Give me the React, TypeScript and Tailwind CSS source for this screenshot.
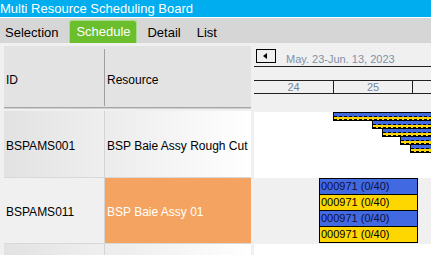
import React from "react";

type Row = {
    id: string;
    resource: string;
    active?: boolean;
};

const rows: Row[] = [
    { id: "BSPAMS001", resource: "BSP Baie Assy Rough Cut" },
    { id: "BSPAMS011", resource: "BSP Baie Assy 01", active: true },
    { id: "", resource: "" },
];

// tiny stacked bars in the first row (left, top inside the row)
const miniBars = [
    { left: 79, top: 0 },
    { left: 118, top: 8 },
    { left: 128, top: 16 },
    { left: 146, top: 24 },
    { left: 156, top: 32 },
];

const orders = ["blue", "yellow", "blue", "yellow"];

const MiniBar = ({ left, top }: { left: number; top: number }) => (
    <div
        className="absolute w-[200px] h-[9px] border border-black flex flex-col"
        style={{ left, top }}
    >
        <div className="h-[4px] bg-[#4169e1] border-b border-dashed border-black" />
        <div className="h-[3px] bg-[#ffd700] border-b border-dashed border-black" />
    </div>
);

const App = () => {
    return (
        <div className="w-[431px] h-[255px] overflow-hidden bg-[#f0f0f0] flex flex-col font-['Liberation_Sans',Arial,sans-serif]">
            <div className="h-[17px] shrink-0 bg-[#00adef] text-white text-[13px] leading-[17px] whitespace-nowrap">
                Multi Resource Scheduling Board
            </div>
            <div className="h-[1px] shrink-0 bg-white" />
            <div className="h-[25px] shrink-0 bg-[#d6d6d6] flex items-end text-[13px] text-black">
                <div className="ml-[5px] h-[23px] flex items-center pt-[3px]">Selection</div>
                <div className="ml-[11px] w-[68px] h-[23px] flex items-center justify-center bg-[#6bbe2c] border border-[#a8dc8a] border-b-0 rounded-t-[3px] text-white">
                    Schedule
                </div>
                <div className="ml-[10px] h-[23px] flex items-center pt-[3px]">Detail</div>
                <div className="ml-[16px] h-[23px] flex items-center pt-[3px]">List</div>
            </div>

            <div className="flex-1 flex pt-[3px] min-h-0 overflow-hidden">
                {/* resource grid */}
                <div className="ml-[4px] w-[247px] shrink-0 flex flex-col text-[12px] text-black">
                    <div className="h-[61px] shrink-0 bg-[#e3e3e3] flex">
                        <div className="w-[100px] flex items-center pt-[6px] pl-[2px]">ID</div>
                        <div className="w-[1px] mt-[3px] mb-[1px] bg-[#a0a0a0]" />
                        <div className="flex-1 flex items-center pt-[6px] pl-[2px]">Resource</div>
                    </div>
                    <div className="h-[1px] shrink-0 bg-[#a6a6a6]" />
                    <div className="h-[1px] shrink-0 bg-[#cfcfcf]" />
                    <div className="h-[2px] shrink-0" />
                    {rows.map((r, i) => (
                        <div
                            key={i}
                            className={`flex shrink-0 border-b border-[#d8d8d8] ${i === 0 ? "h-[67px]" : "h-[66px]"}`}
                        >
                            <div
                                className={`w-[100px] flex items-center pt-[3px] pl-[2px] ${
                                    r.active ? "bg-[#f0f0f0]" : "bg-linear-to-r from-[#e2e2e2] to-[#efefef]"
                                }`}
                            >
                                {r.id}
                            </div>
                            <div className="w-[1px] bg-[#d4d4d4]" />
                            <div
                                className={`flex-1 flex items-center pt-[3px] pl-[2px] whitespace-nowrap overflow-hidden ${
                                    r.active
                                        ? "bg-[#f4a460] text-white"
                                        : "bg-linear-to-r from-[#ececec] to-white"
                                }`}
                            >
                                {r.resource}
                            </div>
                        </div>
                    ))}
                </div>

                {/* gantt chart */}
                <div className="ml-[3px] flex-1 flex flex-col overflow-hidden">
                    <div className="h-[20px] shrink-0 flex items-start">
                        <div className="ml-[2px] mt-[3px] w-[20px] h-[14px] border border-black flex items-center pl-[6px]">
                            <div className="w-0 h-0 border-y-[3px] border-y-transparent border-r-[4px] border-r-black" />
                        </div>
                        <div className="ml-[10px] mt-[7px] text-[11px] leading-[13px] text-[#8090aa] whitespace-nowrap">
                            May. 23-Jun. 13, 2023
                        </div>
                    </div>
                    <div className="h-[1px] shrink-0 bg-[#202020]" />
                    <div className="h-[13px] shrink-0" />
                    <div className="h-[1px] shrink-0 bg-[#202020]" />
                    <div className="h-[12px] shrink-0 flex text-[11px] leading-[12px] text-[#7088a6]">
                        <div className="w-[79px] shrink-0 text-center">24</div>
                        <div className="w-[1px] shrink-0 bg-[#202020]" />
                        <div className="w-[78px] shrink-0 text-center">25</div>
                        <div className="w-[1px] shrink-0 bg-[#202020]" />
                    </div>
                    <div className="h-[1px] shrink-0 bg-[#202020]" />
                    <div className="h-[18px] shrink-0" />
                    <div className="h-[66px] shrink-0 bg-white relative overflow-hidden">
                        {miniBars.map((b, i) => (
                            <MiniBar key={i} left={b.left} top={b.top} />
                        ))}
                    </div>
                    <div className="h-[66px] shrink-0 relative">
                        <div className="absolute left-[65px] top-0 w-[99px] border border-black flex flex-col text-[11px] leading-[15px]">
                            {orders.map((o, i) => (
                                <div
                                    key={i}
                                    className={`pl-[1px] whitespace-nowrap ${
                                        i > 0 ? "border-t border-black h-[16px]" : "h-[15px]"
                                    } ${o === "blue" ? "bg-[#4169e1] text-[#10103a]" : "bg-[#ffd700] text-black"}`}
                                >
                                    000971 (0/40)
                                </div>
                            ))}
                        </div>
                    </div>
                    <div className="flex-1 shrink-0 min-h-[20px] bg-white" />
                </div>
            </div>
        </div>
    );
};

export default App;
